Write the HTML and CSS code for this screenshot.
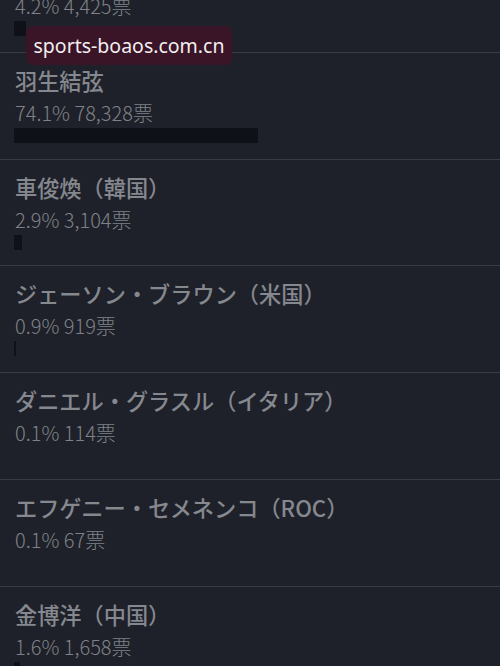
FILE: index.html
```html
<!DOCTYPE html>
<html lang="ja">
<head>
    <meta charset="UTF-8">
    <meta name="viewport" content="width=device-width, initial-scale=1.0">
    <title>投票結果</title>
    <link rel="stylesheet" href="styles.css">
</head>
<body>
<div class="poll">
    <div class="vote-row partial">
        <div class="stats">4.2% 4,425票</div>
        <div class="bar-track"><div class="bar" style="width: 12px"></div></div>
    </div>

    <div class="vote-row">
        <div class="name">羽生結弦</div>
        <div class="stats">74.1% 78,328票</div>
        <div class="bar-track"><div class="bar" style="width: 244px"></div></div>
    </div>

    <div class="vote-row">
        <div class="name">車俊煥（韓国）</div>
        <div class="stats">2.9% 3,104票</div>
        <div class="bar-track"><div class="bar" style="width: 8px"></div></div>
    </div>

    <div class="vote-row">
        <div class="name">ジェーソン・ブラウン（米国）</div>
        <div class="stats">0.9% 919票</div>
        <div class="bar-track"><div class="bar" style="width: 2px"></div></div>
    </div>

    <div class="vote-row">
        <div class="name">ダニエル・グラスル（イタリア）</div>
        <div class="stats">0.1% 114票</div>
        <div class="bar-track"><div class="bar" style="width: 0"></div></div>
    </div>

    <div class="vote-row">
        <div class="name">エフゲニー・セメネンコ（ROC）</div>
        <div class="stats">0.1% 67票</div>
        <div class="bar-track"><div class="bar" style="width: 0"></div></div>
    </div>

    <div class="vote-row">
        <div class="name">金博洋（中国）</div>
        <div class="stats">1.6% 1,658票</div>
        <div class="bar-track"><div class="bar" style="width: 6px"></div></div>
    </div>
</div>

<div class="watermark">sports-boaos.com.cn</div>
</body>
</html>
```

FILE: styles.css
```css
html, body { margin: 0; height: 100%; }
body {
    background-color: #1e2129;
    font-family: "Noto Sans CJK JP", "Noto Sans", sans-serif;
    overflow: hidden;
    position: relative;
}
.poll { margin-top: -7px; }
.vote-row {
    padding: 12px 15px 15.8px 15px;
    border-bottom: 1px solid #393c44;
}
.vote-row.partial { padding-top: 0; }
.name {
    font-size: 22.2px; line-height: 30px; font-weight: 500;
    color: #85888e; white-space: nowrap;
}
.stats {
    font-size: 20px; line-height: 26px; font-weight: 300;
    color: #7e8187; margin-top: 5px;
}
.partial .stats { margin-top: 0; }
.bar-track { height: 15px; margin-top: 2px; margin-left: -1px; }
.bar { height: 100%; background-color: #0e1117; }

.watermark {
    position: absolute; left: 26px; top: 26px;
    width: 206px; height: 39px; box-sizing: border-box;
    background-color: #3a1427; border-radius: 7px;
    color: #f2eef0; font-family: "Noto Sans", sans-serif; font-size: 19.5px;
    display: flex; align-items: center; justify-content: center;
}
```
